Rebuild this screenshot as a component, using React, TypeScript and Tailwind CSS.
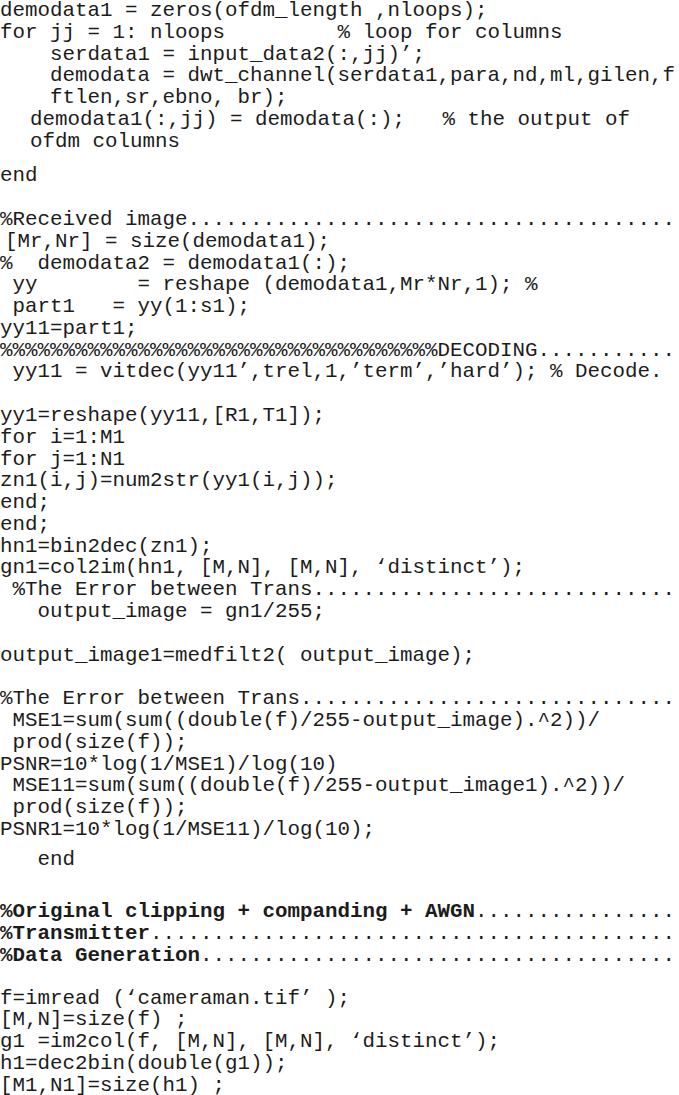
import React from 'react';

const dots = '.'.repeat(80);

const L: React.FC<{ className?: string; children?: React.ReactNode }> = ({ className = '', children }) => (
  <div className={`whitespace-pre overflow-hidden h-[21.75px] ${className}`}>{children}</div>
);

export default function App() {
  return (
    <div className="w-[679px] h-[1095px] overflow-hidden bg-white text-[#1c1c1c] font-['Liberation_Mono','Courier_New',monospace] text-[20.83px] leading-[21.75px]">
      {/* receiver loop */}
      <L>demodata1 = zeros(ofdm_length ,nloops);</L>
      <L>{'for jj = 1: nloops         % loop for columns'}</L>
      <L>{'    serdata1 = input_data2(:,jj)’;'}</L>
      <L>{'    demodata = dwt_channel(serdata1,para,nd,ml,gilen,f'}</L>
      <L>{'    ftlen,sr,ebno, br);'}</L>
      <L className="pl-[30px]">{'demodata1(:,jj) = demodata(:);   % the output of'}</L>
      <L className="pl-[30px]">ofdm columns</L>
      <L className="mt-[13px]">end</L>

      {/* received image */}
      <L className="mt-[22px]">%Received image{dots}</L>
      <L className="pl-[5px]">[Mr,Nr] = size(demodata1);</L>
      <L>{'%  demodata2 = demodata1(:);'}</L>
      <L>{' yy        = reshape (demodata1,Mr*Nr,1); %'}</L>
      <L>{' part1   = yy(1:s1);'}</L>
      <L>yy11=part1;</L>
      <L>{'%%%%%%%%%%%%%%%%%%%%%%%%%%%%%%%%%%%DECODING' + dots}</L>
      <L>{' yy11 = vitdec(yy11’,trel,1,’term’,’hard’); % Decode.'}</L>

      <L className="mt-[22px]">yy1=reshape(yy11,[R1,T1]);</L>
      <L>for i=1:M1</L>
      <L>for j=1:N1</L>
      <L>zn1(i,j)=num2str(yy1(i,j));</L>
      <L>end;</L>
      <L>end;</L>
      <L>hn1=bin2dec(zn1);</L>
      <L>gn1=col2im(hn1, [M,N], [M,N], ‘distinct’);</L>
      <L>{' %The Error between Trans' + dots}</L>
      <L>{'   output_image = gn1/255;'}</L>

      <L className="mt-[22px]">output_image1=medfilt2( output_image);</L>

      <L className="mt-[22px]">%The Error between Trans{dots}</L>
      <L>{' MSE1=sum(sum((double(f)/255-output_image).^2))/'}</L>
      <L>{' prod(size(f));'}</L>
      <L>PSNR=10*log(1/MSE1)/log(10)</L>
      <L>{' MSE11=sum(sum((double(f)/255-output_image1).^2))/'}</L>
      <L>{' prod(size(f));'}</L>
      <L>PSNR1=10*log(1/MSE11)/log(10);</L>
      <L className="mt-[8px]">{'   end'}</L>

      {/* transmitter */}
      <L className="mt-[31px]">
        <span className="font-bold">%Original clipping + companding + AWGN</span>
        {dots}
      </L>
      <L>
        <span className="font-bold">%Transmitter</span>
        {dots}
      </L>
      <L>
        <span className="font-bold">%Data Generation</span>
        {dots}
      </L>

      <L className="mt-[21px]">f=imread (‘cameraman.tif’ );</L>
      <L>[M,N]=size(f) ;</L>
      <L>g1 =im2col(f, [M,N], [M,N], ‘distinct’);</L>
      <L>h1=dec2bin(double(g1));</L>
      <L>[M1,N1]=size(h1) ;</L>
    </div>
  );
}
